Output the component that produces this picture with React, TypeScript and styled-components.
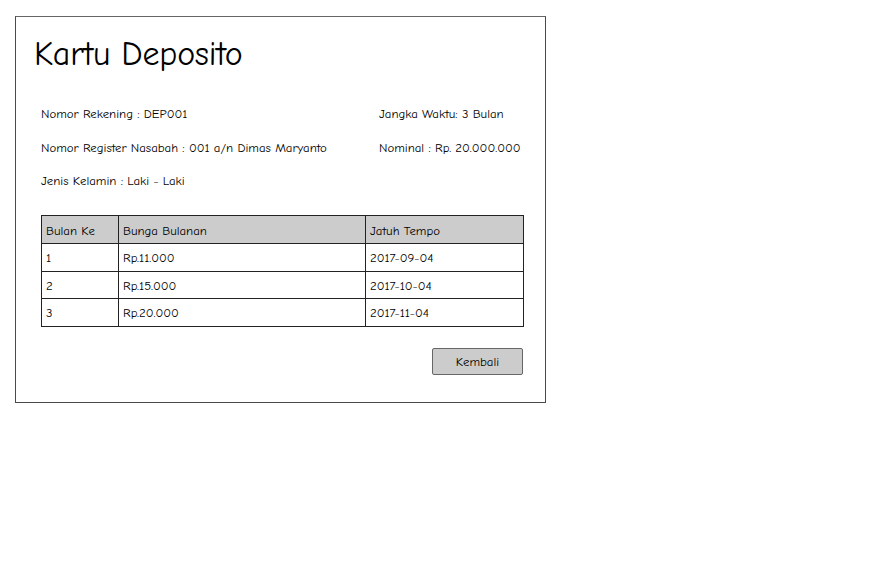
import React from "react";
import styled, { createGlobalStyle } from "styled-components";

const Global = createGlobalStyle`
  html, body { margin: 0; padding: 0; background: #ffffff; }
  body { font-family: "Comic Sans MS", "Comic Neue", "DejaVu Sans", sans-serif; color: #000; }
`;

const Page = styled.div`
  width: 873px;
  height: 584px;
  padding: 16px 0 0 15px;
  box-sizing: border-box;
`;

const Window = styled.div`
  width: 531px;
  height: 387px;
  box-sizing: border-box;
  border: 1px solid #4a4a4a;
  border-top-color: #666;
  padding: 16px 22px 0 25px;
  display: flex;
  flex-direction: column;
`;

const Title = styled.h1`
  margin: 0 0 0 -7px;
  font-size: 34px;
  font-weight: normal;
  line-height: 42px;
  letter-spacing: -0.2px;
`;

const Info = styled.div`
  display: grid;
  grid-template-columns: 338px auto;
  grid-template-rows: 36px 33px 33px;
  margin-top: 20px;
  font-size: 12.8px;
  align-items: center;
`;

const InfoItem = styled.div`
  white-space: nowrap;
`;

const Table = styled.table`
  margin-top: 18px;
  width: 482px;
  border-collapse: collapse;
  font-size: 12.8px;
  table-layout: fixed;
`;

const Th = styled.th<{ $w: number }>`
  width: ${(p) => p.$w}px;
  height: 28px;
  background: #cccccc;
  border: 1px solid #222;
  text-align: left;
  font-weight: normal;
  padding: 2px 4px 0 4px;
  box-sizing: border-box;
`;

const Td = styled.td`
  height: 27.7px;
  border: 1px solid #222;
  padding: 0 4px;
  box-sizing: border-box;
`;

const Footer = styled.div`
  display: flex;
  justify-content: flex-end;
  width: 482px;
  margin-top: 21px;
`;

const Button = styled.button`
  width: 91px;
  height: 27px;
  background: #cccccc;
  border: 1px solid #666;
  border-radius: 2px;
  font-family: inherit;
  font-size: 12.8px;
  color: #000;
  padding: 0;
`;

const rows = [
  ["1", "Rp.11.000", "2017-09-04"],
  ["2", "Rp.15.000", "2017-10-04"],
  ["3", "Rp.20.000", "2017-11-04"],
];

export default function App() {
  return (
    <Page>
      <Global />
      <Window>
        <Title>Kartu Deposito</Title>
        <Info>
          <InfoItem>Nomor Rekening : DEP001</InfoItem>
          <InfoItem>Jangka Waktu: 3 Bulan</InfoItem>
          <InfoItem>Nomor Register Nasabah : 001 a/n Dimas Maryanto</InfoItem>
          <InfoItem>Nominal : Rp. 20.000.000</InfoItem>
          <InfoItem>Jenis Kelamin : Laki - Laki</InfoItem>
          <InfoItem />
        </Info>
        <Table>
          <thead>
            <tr>
              <Th $w={77}>Bulan Ke</Th>
              <Th $w={247}>Bunga Bulanan</Th>
              <Th $w={158}>Jatuh Tempo</Th>
            </tr>
          </thead>
          <tbody>
            {rows.map((r) => (
              <tr key={r[0]}>
                {r.map((c, i) => (
                  <Td key={i}>{c}</Td>
                ))}
              </tr>
            ))}
          </tbody>
        </Table>
        <Footer>
          <Button>Kembali</Button>
        </Footer>
      </Window>
    </Page>
  );
}
